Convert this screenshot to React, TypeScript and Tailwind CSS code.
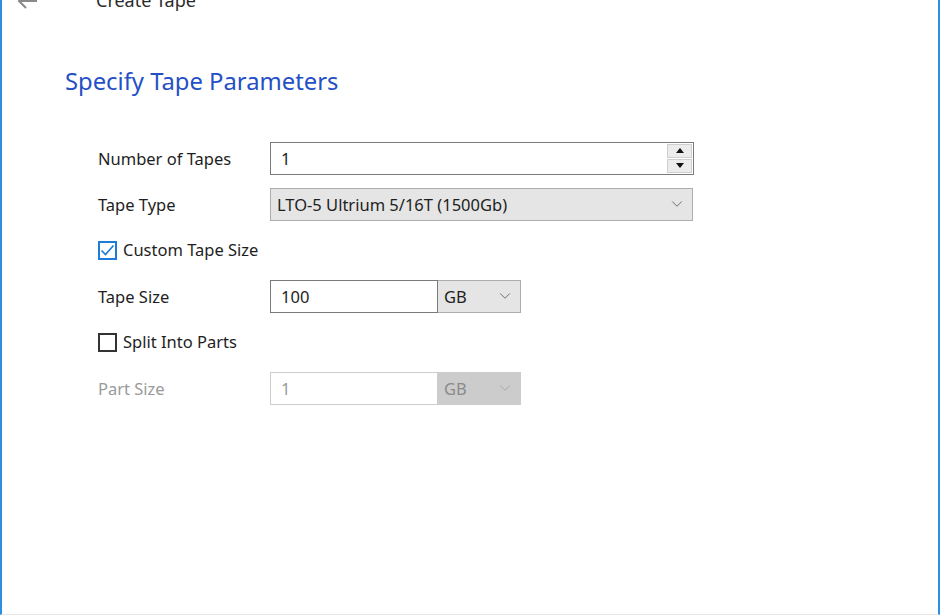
import { ChevronDown } from 'lucide-react';

const font = { fontFamily: '"Noto Sans", "Open Sans", sans-serif' };

function Checkbox({ checked }: { checked: boolean }) {
  return checked ? (
    <div className="w-[19px] h-[19px] border-2 border-[#1e7bd8] flex items-center justify-center bg-white">
      <svg width="15" height="13" viewBox="0 0 15 13" fill="none">
        <path d="M1.5 6.5 L5.5 10.5 L13.5 1.5" stroke="#1e7bd8" strokeWidth="1.7" />
      </svg>
    </div>
  ) : (
    <div className="w-[19px] h-[19px] border-2 border-[#333333] bg-white" />
  );
}

function Label({ children, disabled }: { children: React.ReactNode; disabled?: boolean }) {
  return (
    <div className={`w-[172px] pt-[3px] text-[16.5px] ${disabled ? 'text-[#9a9a9a]' : 'text-[#1e1e1e]'}`}>{children}</div>
  );
}

export default function App() {
  return (
    <div className="w-[940px] h-[615px] bg-white border-x-2 border-[#2b8fe4] border-b border-b-[#e6e6e6] flex flex-col overflow-hidden" style={font}>
      {/* Header */}
      <div className="flex items-center h-[16px] -mt-[8px] pl-[13px]">
        <svg width="24" height="22" viewBox="0 0 24 22" fill="none" className="mt-[2px]">
          <path d="M22 11 H4 M11 4 L4 11 L11 18" stroke="#8a8a8a" strokeWidth="2" />
        </svg>
        <span className="ml-[57px] text-[18px] text-[#2b2b2b] leading-none">Create Tape</span>
      </div>

      <div className="pl-[63px] pt-[62px] text-[23.8px] text-[#2450c4] leading-none">Specify Tape Parameters</div>

      <div className="pl-[96px] pt-[48px] flex flex-col gap-[13px]">
        {/* Number of Tapes */}
        <div className="flex items-center h-[33px]">
          <Label>Number of Tapes</Label>
          <div className="w-[424px] h-[33px] border border-[#7a7a7a] flex items-center bg-white">
            <span className="pl-[10px] pt-[2px] text-[16.5px] text-[#1e1e1e] flex-1">1</span>
            <div className="w-[26px] h-full flex flex-col gap-[1px] py-[1px] pr-[1px]">
              <div className="flex-1 bg-[#ececec] border border-[#cfcfcf] flex items-center justify-center">
                <svg width="8" height="5" viewBox="0 0 8 5"><path d="M0 5 L4 0 L8 5 Z" fill="#111" /></svg>
              </div>
              <div className="flex-1 bg-[#ececec] border border-[#cfcfcf] flex items-center justify-center">
                <svg width="8" height="5" viewBox="0 0 8 5"><path d="M0 0 L4 5 L8 0 Z" fill="#111" /></svg>
              </div>
            </div>
          </div>
        </div>

        {/* Tape Type */}
        <div className="flex items-center h-[33px]">
          <Label>Tape Type</Label>
          <div className="w-[423px] h-[33px] border border-[#adadad] bg-[#e5e5e5] flex items-center justify-between px-[6px]">
            <span className="pt-[2px] text-[16.5px] text-[#1e1e1e]">LTO-5 Ultrium 5/16T (1500Gb)</span>
            <ChevronDown size={18} strokeWidth={1.1} color="#555" />
          </div>
        </div>

        {/* Custom Tape Size */}
        <div className="flex items-center h-[33px] gap-[6px]">
          <Checkbox checked />
          <span className="text-[16.5px] text-[#1e1e1e]">Custom Tape Size</span>
        </div>

        {/* Tape Size */}
        <div className="flex items-center h-[33px]">
          <Label>Tape Size</Label>
          <div className="w-[168px] h-[33px] border border-[#7a7a7a] bg-white flex items-center pl-[10px] pt-[2px] text-[16.5px] text-[#1e1e1e]">100</div>
          <div className="w-[83px] h-[33px] border border-l-0 border-[#adadad] bg-[#e5e5e5] flex items-center justify-between pl-[6px] pr-[6px]">
            <span className="pt-[2px] text-[16.5px] text-[#1e1e1e]">GB</span>
            <ChevronDown size={18} strokeWidth={1.1} color="#555" />
          </div>
        </div>

        {/* Split Into Parts */}
        <div className="flex items-center h-[33px] gap-[6px]">
          <Checkbox checked={false} />
          <span className="text-[16.5px] text-[#1e1e1e]">Split Into Parts</span>
        </div>

        {/* Part Size */}
        <div className="flex items-center h-[33px]">
          <Label disabled>Part Size</Label>
          <div className="w-[168px] h-[33px] border border-[#cccccc] bg-white flex items-center pl-[10px] pt-[2px] text-[16.5px] text-[#9a9a9a]">1</div>
          <div className="w-[83px] h-[33px] border border-l-0 border-[#cccccc] bg-[#cccccc] flex items-center justify-between pl-[6px] pr-[6px]">
            <span className="pt-[2px] text-[16.5px] text-[#8a8a8a]">GB</span>
            <ChevronDown size={18} strokeWidth={1.1} color="#a0a0a0" />
          </div>
        </div>
      </div>
    </div>
  );
}
